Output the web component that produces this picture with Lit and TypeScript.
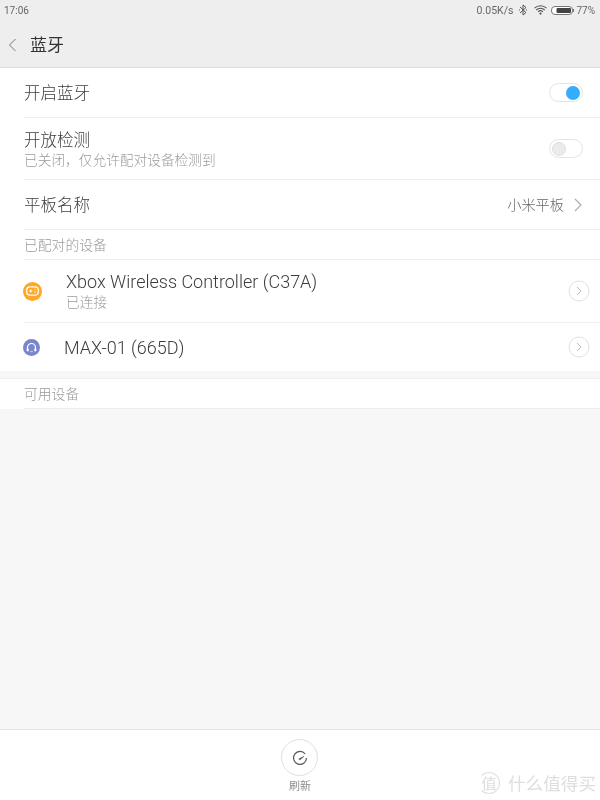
import { LitElement, html, css } from "lit";
import { customElement } from "lit/decorators.js";

@customElement("app-root")
export class AppRoot extends LitElement {
  static styles = css`
    :host { display: block; width: 600px; height: 800px; background: #f7f7f7; font-family: "Noto Sans CJK SC", "Roboto", sans-serif; font-weight: 300; color: #3d3d3d; overflow: hidden; }
    .page { display: flex; flex-direction: column; height: 800px; position: relative; will-change: transform; }
    .top { background: #eeeeee; border-bottom: 1px solid #dcdcdc; height: 67px; box-sizing: content-box; display: flex; flex-direction: column; }
    .status { height: 22px; display: flex; align-items: center; padding: 0 5px 2px 4px; box-sizing: border-box; font-size: 10px; color: #666; font-family: "Roboto", sans-serif; font-weight: 400; }
    .status .sp { flex: 1; }
    .speed { margin-right: 5px; font-size: 10.5px; }
    .st-ic { display: block; flex: none; }
    .bt { margin-right: 6px; }
    .wifi { margin-right: 4px; }
    .batt { margin-right: 2px; }
    .title { flex: 1; display: flex; align-items: center; padding: 0 0 0 8px; font-size: 17px; color: #333; font-weight: 400; }
    .back { margin-right: 13px; display: block; }
    .title-t { position: relative; top: -1px; }
    .white { background: #fff; }
    .row { margin-left: 24px; padding-right: 17px; border-bottom: 1px solid #eeeeee; display: flex; align-items: center; font-size: 16.5px; box-sizing: border-box; }
    .r1 { height: 50px; }
    .r2 { height: 62px; }
    .r3 { height: 50px; padding-right: 18px; }
    .row .grow { flex: 1; min-width: 0; }
    .lift { position: relative; top: -1px; }
    .stack { position: relative; top: -1px; }
    .sub { font-size: 13.7px; color: #9b9b9b; line-height: 16px; margin-top: 1px; }
    .name { line-height: 22px; }
    .switch { width: 34px; height: 19px; border: 1px solid #e4e4e4; border-radius: 10px; box-sizing: border-box; display: flex; align-items: center; background: #fff; padding: 0 2px; flex: none; }
    .switch.on { justify-content: flex-end; }
    .knob { width: 14px; height: 14px; border-radius: 50%; background: #ebebeb; border: 1px solid #dedede; box-sizing: border-box; }
    .on .knob { background: #33adff; border: none; }
    .val { font-size: 14.2px; color: #666; margin-right: 10px; position: relative; top: -1px; }
    .section { height: 30px; margin-left: 24px; border-bottom: 1px solid #eeeeee; display: flex; align-items: center; font-size: 13.8px; color: #9a9a9a; box-sizing: border-box; padding-bottom: 1px; }
    .dev { display: flex; align-items: center; padding-left: 23px; padding-right: 10px; box-sizing: border-box; }
    .d1 { height: 62px; }
    .d2 { height: 48px; }
    .dot { width: 19px; height: 19px; border-radius: 50%; flex: none; display: flex; align-items: center; justify-content: center; }
    .orange { background: #ffa726; }
    .purple { background: #7986cb; width: 17px; height: 17px; }
    .text { flex: 1; margin-left: 24px; font-size: 18px; color: #3d3d3d; font-family: "Roboto", "Noto Sans CJK SC", sans-serif; font-weight: 300; }
    .d1 .text { position: relative; top: -1px; }
    .d1 .sub { margin-top: 0; }
    .text .sub { font-family: "Noto Sans CJK SC", sans-serif; }
    .divider { height: 1px; margin-left: 24px; background: #f1f1f1; }
    .gap { height: 8px; background: #f7f7f7; border-bottom: 1px solid #efefef; box-sizing: border-box; }
    .footer { margin-top: auto; height: 61px; background: #fff; border-top: 1px solid #e3e3e3; display: flex; flex-direction: column; align-items: center; padding-top: 9px; box-sizing: content-box; }
    .refresh { width: 37px; height: 37px; border: 1px solid #e0e0e0; border-radius: 50%; box-sizing: border-box; display: flex; align-items: center; justify-content: center; margin-right: 1px; }
    .flabel { font-size: 11px; color: #8c8c8c; margin-top: 1px; line-height: 16px; font-weight: 400; }
    .mark { position: absolute; right: 0; bottom: 5px; display: flex; align-items: center; gap: 8px; color: #dedede; font-size: 17.6px; padding-right: 4px; font-weight: 400; }
    .mark-c { width: 22px; height: 22px; border: 1px solid #e0e0e0; border-left-color: transparent; border-radius: 50%; font-size: 15px; display: flex; align-items: center; justify-content: center; box-sizing: border-box; }
  `;

  private chev(color: string, w = 8, h = 14) {
    return html`<svg class="st-ic" width=${w} height=${h} viewBox="0 0 8 14"><path d="M1 1l6 6-6 6" fill="none" stroke=${color} stroke-width="1.1"/></svg>`;
  }

  private circleChev() {
    return html`<svg class="st-ic" width="22" height="22" viewBox="0 0 22 22"><circle cx="11" cy="11" r="10" fill="#fff" stroke="#e2e2e2"/><path d="M9 7l4 4-4 4" fill="none" stroke="#bdbdbd" stroke-width="1"/></svg>`;
  }

  render() {
    return html`<div class="page">
      <div class="top">
        <div class="status">
          <span>17:06</span><span class="sp"></span>
          <span class="speed">0.05K/s</span>
          <svg class="st-ic bt" width="10" height="12" viewBox="0 0 10 12"><path d="M2 3l6 5.5L5 11V1l3 2.5L2 9M1 6h1M8 6h1" fill="none" stroke="#555" stroke-width="1"/></svg>
          <svg class="st-ic wifi" width="13" height="10" viewBox="0 0 13 10"><path d="M.5 3.2a8.6 8.6 0 0 1 12 0M2.3 5a6 6 0 0 1 8.4 0M4.1 6.8a3.4 3.4 0 0 1 4.8 0" fill="none" stroke="#555" stroke-width="1.1"/><circle cx="6.5" cy="8.6" r="1.1" fill="#555"/></svg>
          <svg class="st-ic batt" width="23" height="9" viewBox="0 0 23 9"><rect x=".5" y=".5" width="21" height="8" rx="3.5" fill="#fff" stroke="#777"/><rect x="5.5" y="2" width="14.5" height="5" rx="1" fill="#444"/><rect x="22" y="3" width="1" height="3" fill="#777"/></svg>
          <span>77%</span>
        </div>
        <div class="title">
          <svg class="back" width="9" height="14" viewBox="0 0 9 14"><path d="M7.5 1L1.5 7l6 6" fill="none" stroke="#777" stroke-width="1"/></svg>
          <span class="title-t">蓝牙</span>
        </div>
      </div>
      <div class="white">
        <div class="row r1"><div class="grow lift">开启蓝牙</div><div class="switch on"><div class="knob"></div></div></div>
        <div class="row r2"><div class="grow stack"><div class="name">开放检测</div><div class="sub">已关闭，仅允许配对设备检测到</div></div><div class="switch"><div class="knob"></div></div></div>
        <div class="row r3"><div class="grow lift">平板名称</div><span class="val">小米平板</span>${this.chev("#aaa")}</div>
        <div class="section">已配对的设备</div>
        <div class="dev d1">
          <div class="dot orange"><svg width="13" height="10" viewBox="0 0 13 10"><rect x=".7" y=".9" width="11.6" height="8.2" rx="3.4" fill="none" stroke="#fff" stroke-width="1.2"/><path d="M3 5h3.4M4.7 3.3v3.4M8.5 3.8h1.4M8.5 6.2h1.4" stroke="#fff" stroke-width="1"/></svg></div>
          <div class="text"><div class="name">Xbox Wireless Controller (C37A)</div><div class="sub">已连接</div></div>
          ${this.circleChev()}
        </div>
        <div class="divider"></div>
        <div class="dev d2">
          <div class="dot purple"><svg width="11" height="11" viewBox="0 0 11 11"><path d="M1.5 8V5.5a4 4 0 0 1 8 0V8" fill="none" stroke="#fff" stroke-width="1.2"/><path d="M1 7h1.4v2H1zM8.6 7H10v2H8.6zM4 9.7h3" fill="#fff" stroke="#fff" stroke-width=".6"/></svg></div>
          <div class="text">MAX-01 (665D)</div>
          ${this.circleChev()}
        </div>
        <div class="gap"></div>
        <div class="section">可用设备</div>
      </div>
      <div class="footer">
        <div class="refresh"><svg width="16" height="16" viewBox="0 0 16 16"><path d="M13.2 4A6.5 6.5 0 1 0 14.5 8" fill="none" stroke="#555" stroke-width="1.2"/><path d="M6.8 8.8L12 6.4 7.8 10z" fill="#555" stroke="#555" stroke-width=".5"/></svg></div>
        <div class="flabel">刷新</div>
      </div>
      <div class="mark"><span class="mark-c">值</span><span>什么值得买</span></div>
    </div>`;
  }
}
